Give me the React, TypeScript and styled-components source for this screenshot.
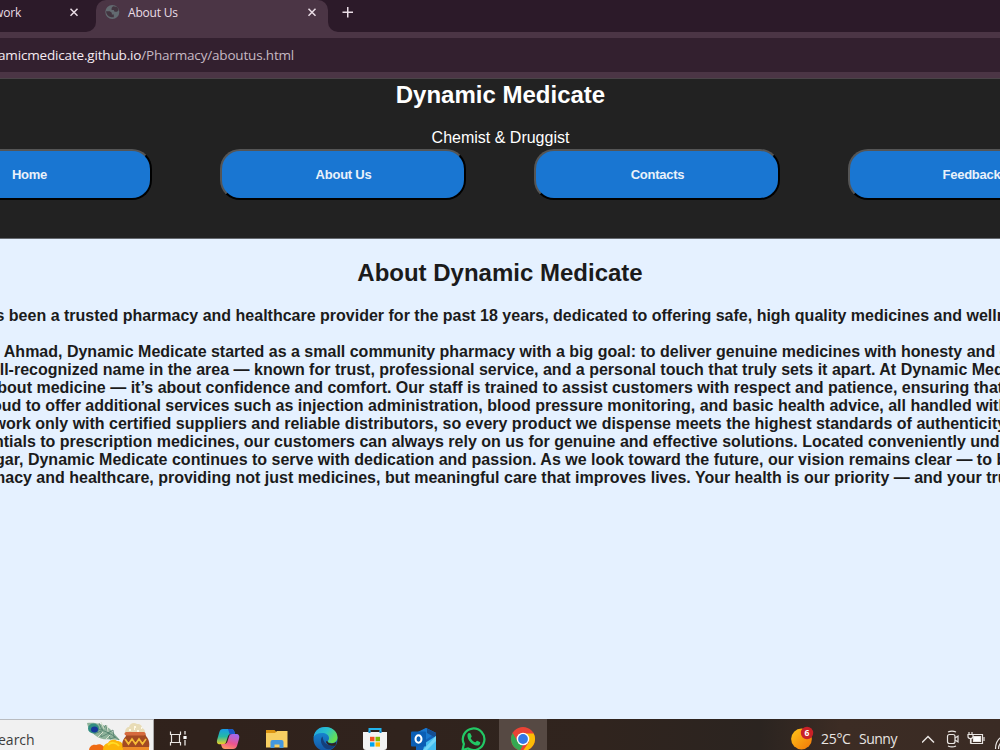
import React from 'react';
import styled, { createGlobalStyle } from 'styled-components';

const Global = createGlobalStyle`
  * { box-sizing: border-box; }
  body { margin: 0; overflow: hidden; }
`;
const Screen = styled.div`
  width: 1000px; height: 750px; display: flex; flex-direction: column; overflow: hidden;
  background: #e5f1ff; font-family: "Liberation Sans", Arial, sans-serif;
`;
const ui = `font-family: "Open Sans", "Noto Sans", sans-serif; white-space: pre;`;
const TabStrip = styled.div`
  ${ui} height: 32px; flex: none; display: flex; background: #2c1a29; color: #eadde6;
`;
const TabFoot = styled.div<{ $w: number }>`
  width: ${p => p.$w}px; height: 32px; flex: none;
  background: linear-gradient(#2c1a29 50%, #4b3545 50%);
`;
const PastTab = styled.div`
  height: 32px; padding: 4px 17px 0 0; display: flex; justify-content: space-between;
  font-size: 12px; line-height: 18px; background: #2c1a29; border-radius: 0 0 10px 0;
`;
const NewTabArea = styled.div`height: 32px; background: #2c1a29; border-radius: 0 0 0 10px; display: flex;`;
const ActiveTab = styled.div`
  width: 232px; height: 32px; background: #4b3545; border-radius: 10px 10px 0 0; display: flex; flex: none;
  padding: 4px 11px 0 9px; font-size: 12px; line-height: 18px;
`;
const Label = styled.span<{ $ls?: number }>`letter-spacing: ${p => p.$ls ?? 0}px; white-space: pre;`;
const PastTitle = styled(Label)`margin-left: -6px;`;
const TabTitle = styled(Label)`margin-left: 8px; flex: 1;`;
const Glyph = styled.svg`display: block; flex: none;`;
const AddressRow = styled.div`
  ${ui} height: 47px; flex: none; background: #4b3545; padding: 6px 0; border-bottom: 1px solid #4a4448;
`;
const AddressBar = styled.div`
  height: 34px; background: #33202f; color: #c6b9c3; font-size: 13.5px; line-height: 34px; display: flex;
`;
const Host = styled(Label)`color: #f5ebf2; margin-left: -2px;`;
const Header = styled.header`
  height: 160px; flex: none; background: #222; color: #fff; text-align: center; border-bottom: 1px solid #666a70;
`;
const Brand = styled.h1`margin: 0; padding: 2px 0 0 1px; font-size: 24px; line-height: 28px;`;
const Tagline = styled.p`margin: 20px 0 0; font-size: 16px; line-height: 18px; height: 20px; padding-left: 1px;`;
const Nav = styled.nav`display: flex; gap: 68px; margin-left: -94px; width: 1190px;`;
const NavButton = styled.button`
  width: 246px; height: 50.500px; flex: none; border: 2px solid; border-color: #555 #000 #000 #555; border-radius: 20px;
  background: #1976d2; color: #e9f1fa; font: bold 13px/18px "Liberation Sans", Arial, sans-serif;
  letter-spacing: -0.25px; padding: 1px 0 0 1px;
`;
const Article = styled.main`height: 480px; flex: none; color: #1b1b1b; font-weight: bold; font-size: 16px;`;
const Title = styled.h2`margin: 0; padding: 20px 0 0; text-align: center; font-size: 24px; line-height: 28px; height: 68px;`;
const Line = styled.div<{ $x: number; $gap?: boolean }>`
  height: 18px; line-height: 18px; white-space: pre; margin-left: ${p => p.$x}px; width: 1100px;
  margin-bottom: ${p => (p.$gap ? 18 : 0)}px;
`;
const Taskbar = styled.footer`
  ${ui} height: 31px; flex: none; display: flex; color: #e9e5e2;
  background: linear-gradient(90deg, #30211b 0, #30241e 60%, #2b2420 76%, #3c2c24 84%, #3a2b24 100%);
`;
const Search = styled.div`
  width: 154px; height: 31px; background: #f1f1f1; border-top: 1px solid #b9bcc0; border-right: 1px solid #aaa;
  display: flex; color: #3c3c3c; font-size: 14px; line-height: 39px; overflow: hidden; flex: none;
`;
const SearchText = styled(Label)`width: 88px; margin-left: -2px; flex: none;`;
const TaskSlot = styled.div<{ $active?: boolean }>`
  width: ${p => (p.$active ? 48 : 49)}px; height: 31px; flex: none; display: flex; justify-content: center;
  background: ${p => (p.$active ? '#564943' : 'transparent')};
  margin-left: ${p => (p.$active ? 2 : 0)}px;
`;
const TaskButtons = styled.div`display: flex; flex: none; width: 394px;`;
const Weather = styled.div`display: flex; margin-left: 243px; width: 131px; font-size: 14px; line-height: 40px; flex: none;`;
const Temp = styled(Label)`margin-left: 6px; width: 38px; flex: none;`;
const Tray = styled.div`display: flex; flex: none;`;

const Cross = () => (
  <Glyph width="10" height="18" viewBox="0 0 10 18"><path d="M1.5 4.8l7 7M8.5 4.8l-7 7" stroke="#eadde6" strokeWidth="1.5" /></Glyph>
);
const Globe = () => (
  <Glyph width="15" height="18" viewBox="0 0 15 18">
    <circle cx="7.3" cy="8" r="7" fill="#626a70" />
    <path d="M1 7.3h3.8l2 1.5v1.7h2v2.7H6.2c-3.4-.6-5-3-5.2-5.9zM8 2.2l4.3.7 1.3 3-1.5 1.8H9.6L8.7 6H6.6V4.1z" fill="#433540" />
  </Glyph>
);
const FestivalArt = () => (
  <Glyph width="66" height="30" viewBox="0 0 66 30">
    <path d="M1 3c8-1 17 1 23 6l10 11c-9-1-18 1-24-4C5 12 2 9 1 3z" fill="#8fb39b" />
    <path d="M8 8c9 2 17 5 25 12M13 3l3 7 4-5 2 8 5-3 1 7M8 14l7-3 0 6 8-4 1 6 6-2" fill="none" stroke="#527f6c" strokeWidth="0.8" />
    <path d="M15 2l3 7M21 5l1 7M12 17l5-5M20 19l4-4" stroke="#d7e2ce" strokeWidth="1" />
    <ellipse cx="7.500" cy="8.500" rx="5.500" ry="5" fill="#318e82" /><ellipse cx="8.500" cy="9.500" rx="3.500" ry="3" fill="#16379b" />
    <path d="M3 31c0-4 3-7 7-6 5-2 9 1 9 6z" fill="#ef6a13" />
    <path d="M17 31c0-4 1-7 5-8 2-4 7-4 9-2 4 0 7 3 6 6v4z" fill="#fcb509" />
    <path d="M22 25c3-3 8-3 11 1" fill="none" stroke="#ffdb25" strokeWidth="2" />
    <path d="M39 12c0-3 2-5 4-5 1-4 5-5 8-3 4 0 5 2 5 4 3 1 3 3 3 5z" fill="#e8dcb6" />
    <path d="M43 10h2m3-3h2m1 4h2m2-3h1m-8 1h1" stroke="#fff9e5" strokeWidth="2" />
    <path d="M40 13h19l1 3c4 4 4 10 2 15H38c-3-6-2-11 2-15z" fill="#a34a22" />
    <rect x="38.500" y="12" width="21" height="3.500" rx="1.700" fill="#d66a3d" />
    <path d="M39 19l3.500 5 3.500-5 3.500 5 3.500-5 3.500 5 3.500-5" fill="none" stroke="#f7bd37" strokeWidth="1.700" />
    <path d="M37 28.500h26" stroke="#ed8b28" strokeWidth="3" />
  </Glyph>
);
const TaskView = () => (
  <Glyph width="22" height="31" viewBox="0 0 22 31">
    <path d="M2.500 12.500v3h10v-3M2.500 26.500v-3h10v3M3.500 15.500h8v8h-8z" stroke="#e9e5e2" fill="none" strokeWidth="1.200" />
    <path d="M17 12v3.500M17 21v5.500" stroke="#e9e5e2" strokeWidth="1.300" /><path d="M15.400 17h3.200v3h-3.200z" fill="#fff" />
  </Glyph>
);
const Copilot = () => (
  <Glyph width="24" height="31" viewBox="0 0 24 31">
    <defs>
      <linearGradient id="cpA" x1="0" y1="0" x2="0" y2="1"><stop stopColor="#179be8" /><stop offset=".5" stopColor="#25b9a4" /><stop offset="1" stopColor="#efcf20" /></linearGradient>
      <linearGradient id="cpB" x1=".6" y1="0" x2=".2" y2="1"><stop stopColor="#a568ea" /><stop offset=".55" stopColor="#ee548d" /><stop offset="1" stopColor="#ff9a62" /></linearGradient>
    </defs>
    <path d="M7 10h8c2 0 3 1.300 3.500 3l.6 2h-4c-2 0-2.800 1-3.400 3l-1.600 5c-.6 1.800-1.200 2.200-3 2.200H4c-3 0-3.600-2-2.700-5l2-7C4 11 5 10 7 10z" fill="url(#cpA)" />
    <path d="M12 10h3c2 0 3 1.300 3.500 3l.6 2h-4c-.6 0-1 .1-1.400.3z" fill="#1c56c9" />
    <path d="M17 30H9c-2 0-3-1.300-3.500-3L5 25h3c2 0 3-1 3.500-2.700l1.700-5c.5-1.500 1.300-2.300 3-2.300H20c3 0 3.800 2 3 5l-2 7c-.7 2-2 3-4 3z" fill="url(#cpB)" />
  </Glyph>
);
const Folder = () => (
  <Glyph width="22" height="31" viewBox="0 0 22 31">
    <path d="M0 11h8.500l2 2H21v4H0z" fill="#dd9512" /><path d="M0 14h9l2-2h10.500v16.500H0z" fill="#f8cf62" />
    <path d="M4.500 29v-6q0-2 2-2h9q2 0 2 2v6h-4v-3.500h-5V29z" fill="#4398df" />
  </Glyph>
);
const Edge = () => (
  <Glyph width="25" height="31" viewBox="0 0 25 31">
    <defs>
      <linearGradient id="edA" x1="0" y1="0" x2="1" y2=".5"><stop stopColor="#1fa0e3" /><stop offset=".55" stopColor="#2ac2ca" /><stop offset="1" stopColor="#65df55" /></linearGradient>
      <linearGradient id="edB" x1="0" y1="0" x2="0" y2="1"><stop stopColor="#1791dc" /><stop offset="1" stopColor="#1455a3" /></linearGradient>
    </defs>
    <circle cx="12.500" cy="20" r="12" fill="url(#edB)" />
    <path d="M.6 18C2 11 6 8 12.500 8 19 8 24.500 12.500 24.500 18.500c0 3.500-2.500 5.500-6 5.500-2.500 0-4-1-3.800-2 .8-.8 1.300-1.700 1.300-3 0-3-3-5-7-5-4 0-7 1.500-8.400 4z" fill="url(#edA)" />
    <path d="M9.500 17.500c-3 3-1.500 9 3 12 3 1.600 7.500.8 10.500-4-3 1.500-7 1.500-10-.7-2-1.600-3-4.300-3.500-7.300z" fill="#153f7b" />
    <path d="M14.500 22c-.4 1.300 1.500 2.400 4 2.400 2 0 4-.7 5-2l-1 4c-4 1-9-.4-9.500-4z" fill="#30221c" />
  </Glyph>
);
const Store = () => (
  <Glyph width="24" height="31" viewBox="0 0 24 31">
    <path d="M6.500 15v-5h11v5" fill="none" stroke="#23b4ed" strokeWidth="2" />
    <path d="M0 13h24v15q0 3-3 3H3q-3 0-3-3z" fill="#f3f3f3" />
    <path d="M6.500 14v-2M17.500 14v-2" stroke="#1388c9" strokeWidth="2" />
    <path d="M7 17.800h4.500v4.500H7z" fill="#f25022" /><path d="M12.500 17.800H17v4.500h-4.500z" fill="#7fba00" />
    <path d="M7 23.300h4.500v4.300H7z" fill="#00a4ef" /><path d="M12.500 23.300H17v4.300h-4.500z" fill="#ffb900" />
  </Glyph>
);
const Outlook = () => (
  <Glyph width="25" height="31" viewBox="0 0 25 31">
    <path d="M5 14l10-5 10 5v17H5z" fill="#1162b9" /><path d="M5 14l10-5 10 5-12 8z" fill="#1978cf" />
    <path d="M16 9.500l9 4.500v5l-9-5z" fill="#154e91" /><path d="M25 17v14H12l2-7z" fill="#43bdf0" /><path d="M12 31l13-14v5l-9 9z" fill="#70d5f8" />
    <rect x="0" y="12.500" width="15" height="15" rx="1" fill="#0a5eb5" /><ellipse cx="7.500" cy="20" rx="3" ry="3.700" fill="none" stroke="#fff" strokeWidth="2" />
  </Glyph>
);
const WhatsApp = () => (
  <Glyph width="26" height="31" viewBox="0 0 26 31">
    <path d="M2.500 31l1.400-6A10.800 10.800 0 1 1 8 29.500z" fill="none" stroke="#22c865" strokeWidth="2.200" />
    <path d="M7.500 15.500c1-2 2.500-1.800 3-1l1.200 2.700c.2.800-.8 1.500-1 2 1 2 2.500 3.300 4.700 4.100.6-.3 1-1.600 1.800-1.600l3 1.500c.4 2-1.500 3.500-3.300 3.400-5-.6-10-5.700-9.400-11.100z" fill="#22c865" />
  </Glyph>
);
const Chrome = () => (
  <Glyph width="24" height="31" viewBox="0 0 24 31">
    <circle cx="12" cy="20" r="12" fill="#ea4335" />
    <path d="M1.600 14L7 23l5 3-3 5.600A12 12 0 0 1 1.600 14z" fill="#35a852" />
    <path d="M12 14.500h10.700A12 12 0 0 1 11.800 32L18 23z" fill="#fbbc05" />
    <circle cx="12" cy="20" r="6.300" fill="#fff" /><circle cx="12" cy="20" r="4.900" fill="#3478e5" />
  </Glyph>
);
const WeatherIcon = () => (
  <Glyph width="24" height="31" viewBox="0 0 24 31">
    <defs><linearGradient id="sun" x1="0" y1="0" x2="1" y2="1"><stop stopColor="#ffc519" /><stop offset="1" stopColor="#f27608" /></linearGradient></defs>
    <circle cx="10.500" cy="20" r="10.400" fill="url(#sun)" /><circle cx="16" cy="14" r="6.200" fill="#c92127" />
    <text x="16" y="17" textAnchor="middle" fontSize="8.500" fontWeight="bold" fill="#fff" fontFamily="Open Sans, sans-serif">6</text>
  </Glyph>
);
const TrayIcons = () => (
  <Glyph width="78" height="31" viewBox="0 0 78 31" fill="none" stroke="#e9e5e2" strokeWidth="1.200">
    <path d="M0 23.500l6-6 6 6" strokeWidth="1.500" />
    <rect x="25.500" y="15.500" width="7.500" height="9" rx="2" /><path d="M33 19l3-2v6l-3-2M26 13c2.500-1.200 5.500-1.200 8 0M26 27c2.500 1.200 5.500 1.200 8 0" />
    <path d="M49 15.500h11.500v9H49z" /><path d="M51.500 17.500h7v5h-7z" fill="#fff" /><path d="M62 18v4" />
    <path d="M46 15.500h5v2q0 2-2.500 2t-2.500-2z" fill="#3a2b24" /><path d="M47 13v2.500M50 13v2.500M48.500 19.500v5" />
    <path d="M73.500 30c0-6 3-11 8-13M76.500 30c0-4 2-7 6-9" />
  </Glyph>
);

const lines: { text: string; x: number; gap?: boolean }[] = [
  { x: -4.5, gap: true, text: 's been a trusted pharmacy and healthcare provider for the past 18 years, dedicated to offering safe, high quality medicines and wellness' },
  { x: -4.5, text: '. Ahmad, Dynamic Medicate started as a small community pharmacy with a big goal: to deliver genuine medicines with honesty and care' },
  { x: -0.3, text: 'll-recognized name in the area — known for trust, professional service, and a personal touch that truly sets it apart. At Dynamic Medicate' },
  { x: -2.7, text: 'bout medicine — it’s about confidence and comfort. Our staff is trained to assist customers with respect and patience, ensuring that every' },
  { x: -8, text: 'oud to offer additional services such as injection administration, blood pressure monitoring, and basic health advice, all handled with care' },
  { x: -6.5, text: 'work only with certified suppliers and reliable distributors, so every product we dispense meets the highest standards of authenticity' },
  { x: -6, text: 'ntials to prescription medicines, our customers can always rely on us for genuine and effective solutions. Located conveniently under' },
  { x: -5, text: 'gar, Dynamic Medicate continues to serve with dedication and passion. As we look toward the future, our vision remains clear — to be' },
  { x: -9, text: 'macy and healthcare, providing not just medicines, but meaningful care that improves lives. Your health is our priority — and your trust' },
];

export default function App() {
  return (
    <Screen>
      <Global />
      <TabStrip>
        <TabFoot $w={96}>
          <PastTab><PastTitle $ls={-0.1}>work</PastTitle><Cross /></PastTab>
        </TabFoot>
        <ActiveTab><Globe /><TabTitle $ls={-0.2}>About Us</TabTitle><Cross /></ActiveTab>
        <TabFoot $w={672}>
          <NewTabArea>
            <Glyph width="40" height="31" viewBox="0 0 40 31"><path d="M14.500 12.200h10.500M19.750 7v10.500" stroke="#eadde6" strokeWidth="1.500" /></Glyph>
          </NewTabArea>
        </TabFoot>
      </TabStrip>
      <AddressRow>
        <AddressBar><Host $ls={-0.17}>amicmedicate.github.io</Host><Label $ls={-0.18}>/Pharmacy/aboutus.html</Label></AddressBar>
      </AddressRow>
      <Header>
        <Brand>Dynamic Medicate</Brand>
        <Tagline>Chemist &amp; Druggist</Tagline>
        <Nav>{['Home', 'About Us', 'Contacts', 'Feedback'].map(n => <NavButton key={n}>{n}</NavButton>)}</Nav>
      </Header>
      <Article>
        <Title>About Dynamic Medicate</Title>
        {lines.map(l => <Line key={l.text} $x={l.x} $gap={l.gap}>{l.text}</Line>)}
      </Article>
      <Taskbar>
        <Search><SearchText>earch</SearchText><FestivalArt /></Search>
        <TaskButtons>
          <TaskSlot><TaskView /></TaskSlot>
          <TaskSlot><Copilot /></TaskSlot>
          <TaskSlot><Folder /></TaskSlot>
          <TaskSlot><Edge /></TaskSlot>
          <TaskSlot><Store /></TaskSlot>
          <TaskSlot><Outlook /></TaskSlot>
          <TaskSlot><WhatsApp /></TaskSlot>
          <TaskSlot $active><Chrome /></TaskSlot>
        </TaskButtons>
        <Weather><WeatherIcon /><Temp $ls={-0.3}>25°C</Temp><Label $ls={-0.5}>Sunny</Label></Weather>
        <Tray><TrayIcons /></Tray>
      </Taskbar>
    </Screen>
  );
}
